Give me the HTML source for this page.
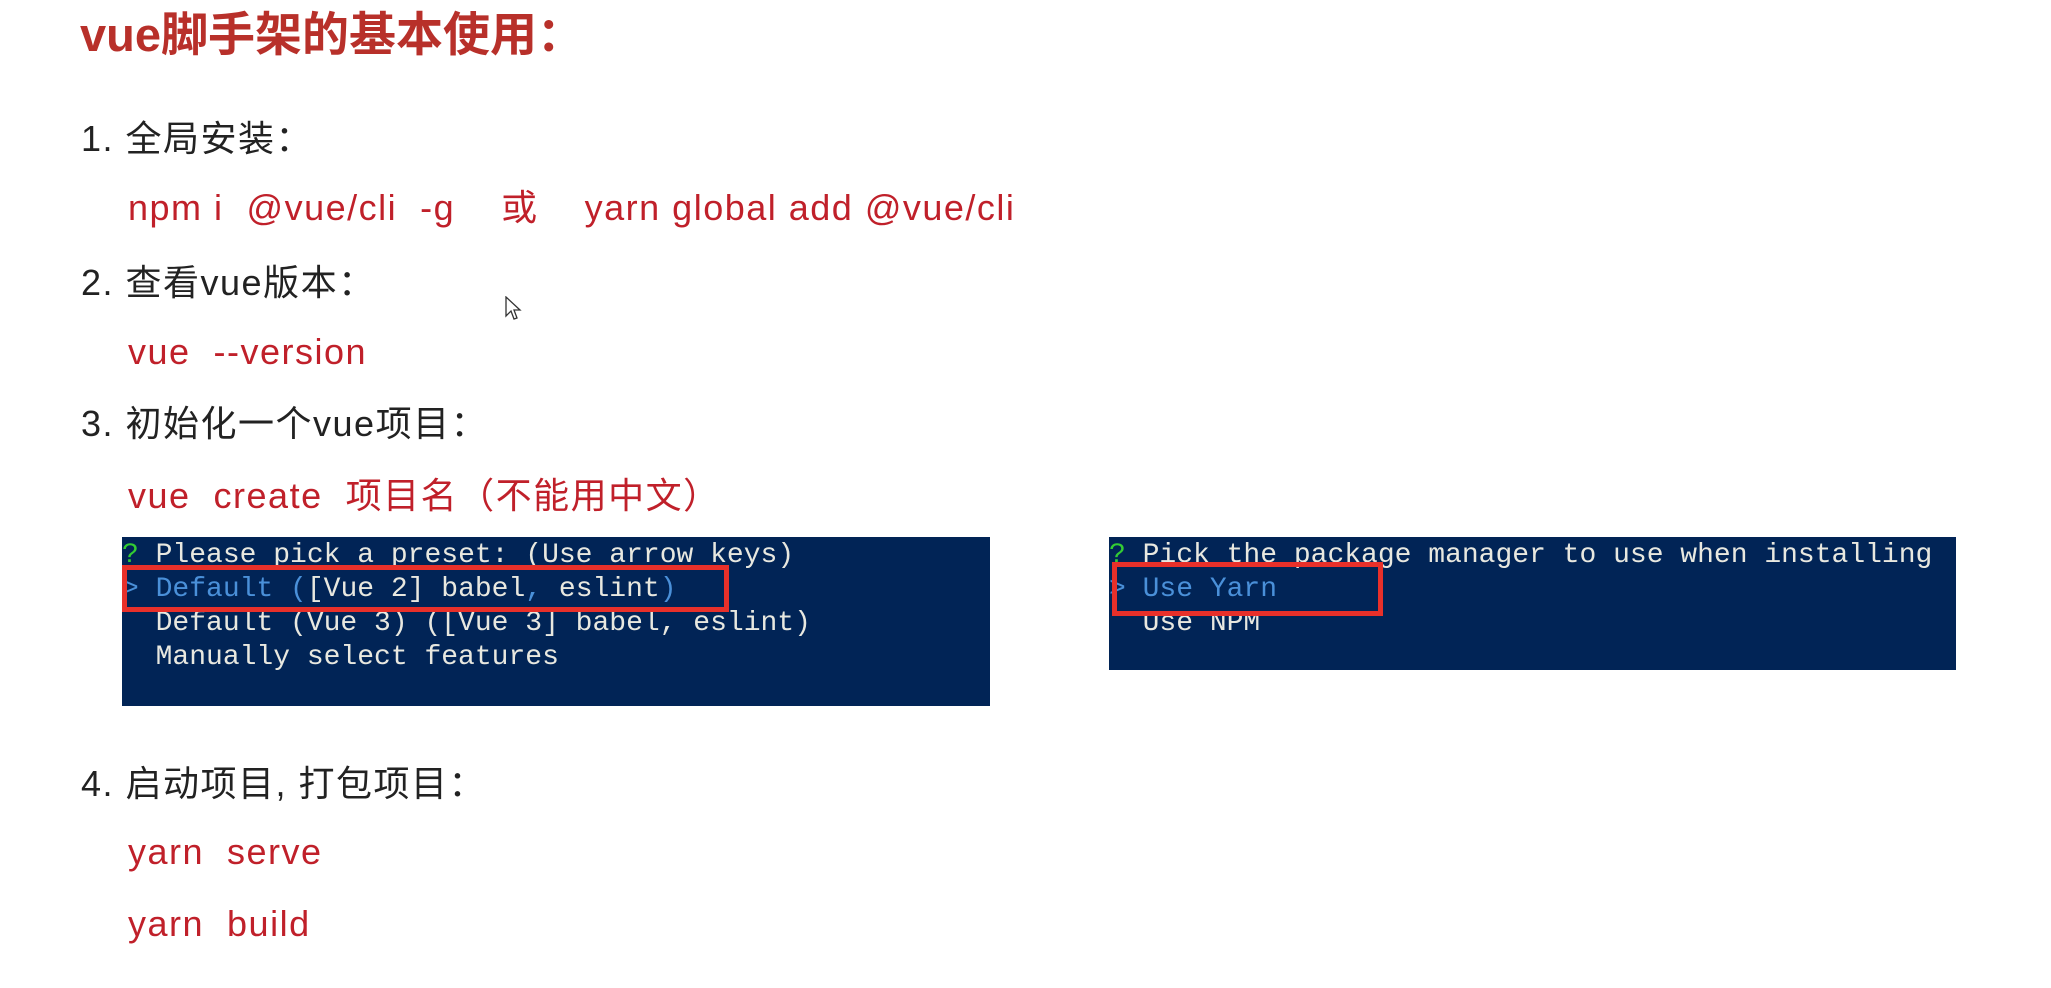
<!DOCTYPE html>
<html><head><meta charset="utf-8"><style>
body{margin:0;width:2051px;height:988px;background:#fff;position:relative;overflow:hidden;font-family:"Liberation Sans","Noto Sans CJK SC",sans-serif}
.t{position:absolute;white-space:pre;line-height:1;letter-spacing:1.5px}
.h{left:80px;top:11px;font-size:47px;font-weight:bold;color:#b8302a;letter-spacing:0}
.b{left:81px;font-size:36px;color:#222}
.r{left:128px;font-size:36px;color:#c0202a}
.term{position:absolute;background:#012456;font-family:"Liberation Mono","Noto Sans CJK SC",monospace;font-size:28px;color:#e8e8e0;line-height:34px;white-space:pre;overflow:hidden}
.box{position:absolute;border:5px solid #e8302a;box-sizing:border-box}
</style></head><body>
<div class="t h">vue脚手架的基本使用：</div>
<div class="t b" style="top:121px">1. 全局安装：</div>
<div class="t r" style="top:190px">npm i  @vue/cli  -g    或    yarn global add @vue/cli</div>
<div class="t b" style="top:265px">2. 查看vue版本：</div>
<div class="t r" style="top:334px">vue  --version</div>
<div class="t b" style="top:406px">3. 初始化一个vue项目：</div>
<div class="t r" style="top:478px">vue  create  项目名（不能用中文）</div>
<div class="term" style="left:122px;top:537px;width:868px;height:167px;padding-top:2px"><span style="color:#3c3">?</span> Please pick a preset: (Use arrow keys)
<span style="color:#4a90d9">&gt; Default (</span>[Vue 2] babel<span style="color:#4a90d9">,</span> eslint<span style="color:#4a90d9">)</span>
  Default (Vue 3) ([Vue 3] babel, eslint)
  Manually select features</div>
<div class="box" style="left:122px;top:565px;width:607px;height:47px"></div>
<div class="term" style="left:1109px;top:537px;width:847px;height:131px;padding-top:2px"><span style="color:#3c3">?</span> Pick the package manager to use when installing
<span style="color:#4a90d9">&gt; Use Yarn</span>
  Use NPM</div>
<div class="box" style="left:1112px;top:562px;width:271px;height:54px"></div>
<div class="t b" style="top:766px">4. 启动项目, 打包项目：</div>
<div class="t r" style="top:834px">yarn  serve</div>
<div class="t r" style="top:906px">yarn  build</div>
<svg style="position:absolute;left:505px;top:296px" width="18" height="28" viewBox="0 0 18 28"><path d="M1 1 L1 20 L6 15 L9 23 L12 22 L9 14 L15 14 Z" fill="#fff" stroke="#333" stroke-width="1.3"/></svg>
</body></html>
